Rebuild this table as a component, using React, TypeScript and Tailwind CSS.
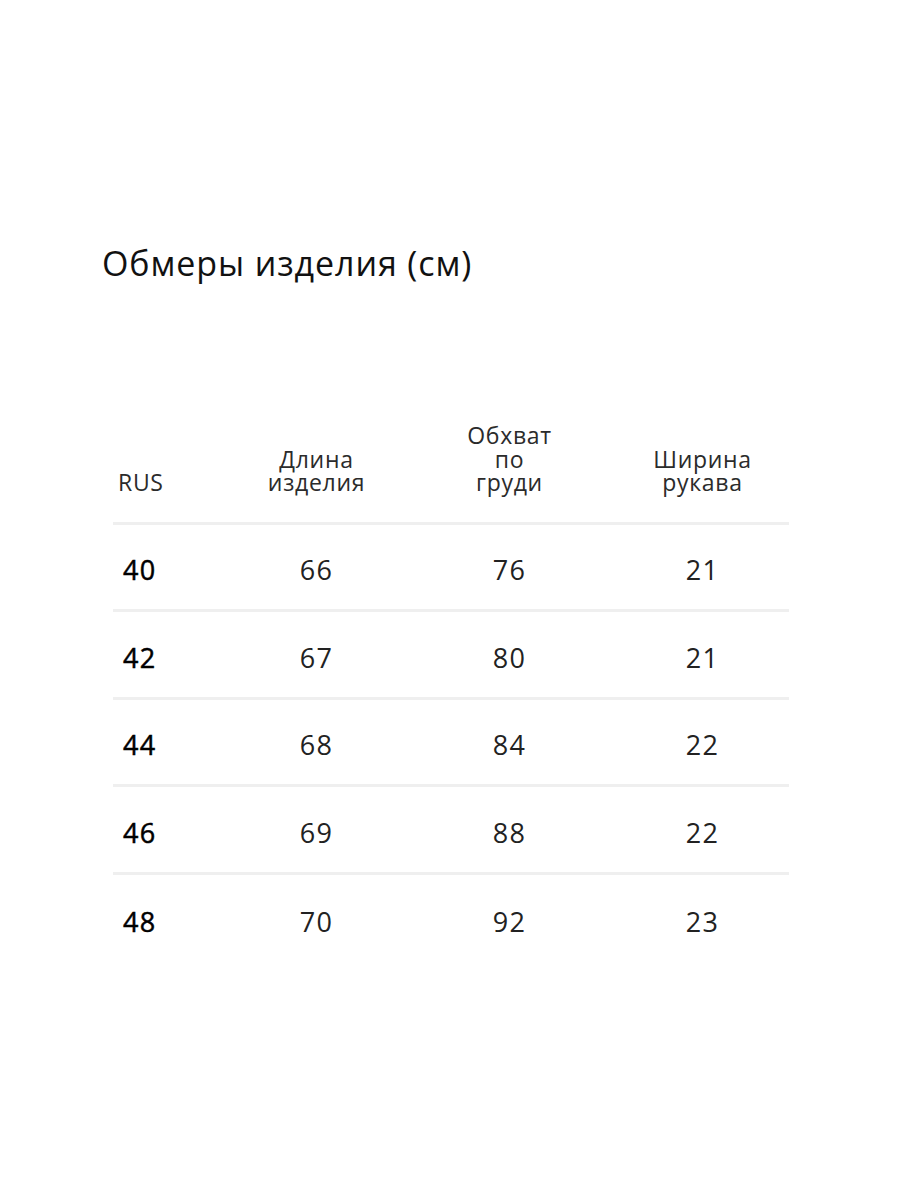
const headers = [
  ["RUS"],
  ["Длина", "изделия"],
  ["Обхват", "по", "груди"],
  ["Ширина", "рукава"],
];

const rows = [
  ["40", "66", "76", "21"],
  ["42", "67", "80", "21"],
  ["44", "68", "84", "22"],
  ["46", "69", "88", "22"],
  ["48", "70", "92", "23"],
];

export default function App() {
  return (
    <div
      className="min-h-[1200px] w-[900px] bg-white pt-[243px]"
      style={{ fontFamily: '"Open Sans", "Noto Sans", sans-serif' }}
    >
      <h1 className="ml-[102px] text-[34px] leading-[40px] font-normal tracking-[0.9px] text-[#111]">
        Обмеры изделия (см)
      </h1>

      <div className="ml-[113px] mt-[141px] w-[676px]">
        {/* header */}
        <div className="grid grid-cols-[107px_193px_193px_193px] items-end border-b-[3px] border-[#efefef] pb-[27px]">
          {headers.map((lines, i) => (
            <div
              key={i}
              className={
                i === 0
                  ? "pl-[5px] text-[23px] leading-[23.5px] tracking-[0.7px] text-[#2b2b2b]"
                  : "text-center text-[23px] leading-[23.5px] tracking-[0.7px] text-[#2b2b2b]"
              }
            >
              {lines.map((l) => (
                <div key={l}>{l}</div>
              ))}
            </div>
          ))}
        </div>

        {/* rows */}
        {rows.map((r, ri) => (
          <div
            key={r[0]}
            className={
              ri < rows.length - 1
                ? "grid h-[87.5px] grid-cols-[107px_193px_193px_193px] items-center border-b-[3px] border-[#efefef] pt-[7px]"
                : "grid h-[87.5px] grid-cols-[107px_193px_193px_193px] items-center pt-[7px]"
            }
          >
            {r.map((v, ci) => (
              <div
                key={ci}
                className={
                  ci === 0
                    ? "pl-[10px] text-[27px] leading-[32px] font-normal tracking-[1.2px] text-[#000] [-webkit-text-stroke:0.5px_#000]"
                    : "text-center text-[27px] leading-[32px] tracking-[1.2px] text-[#222]"
                }
              >
                {v}
              </div>
            ))}
          </div>
        ))}
      </div>
    </div>
  );
}
